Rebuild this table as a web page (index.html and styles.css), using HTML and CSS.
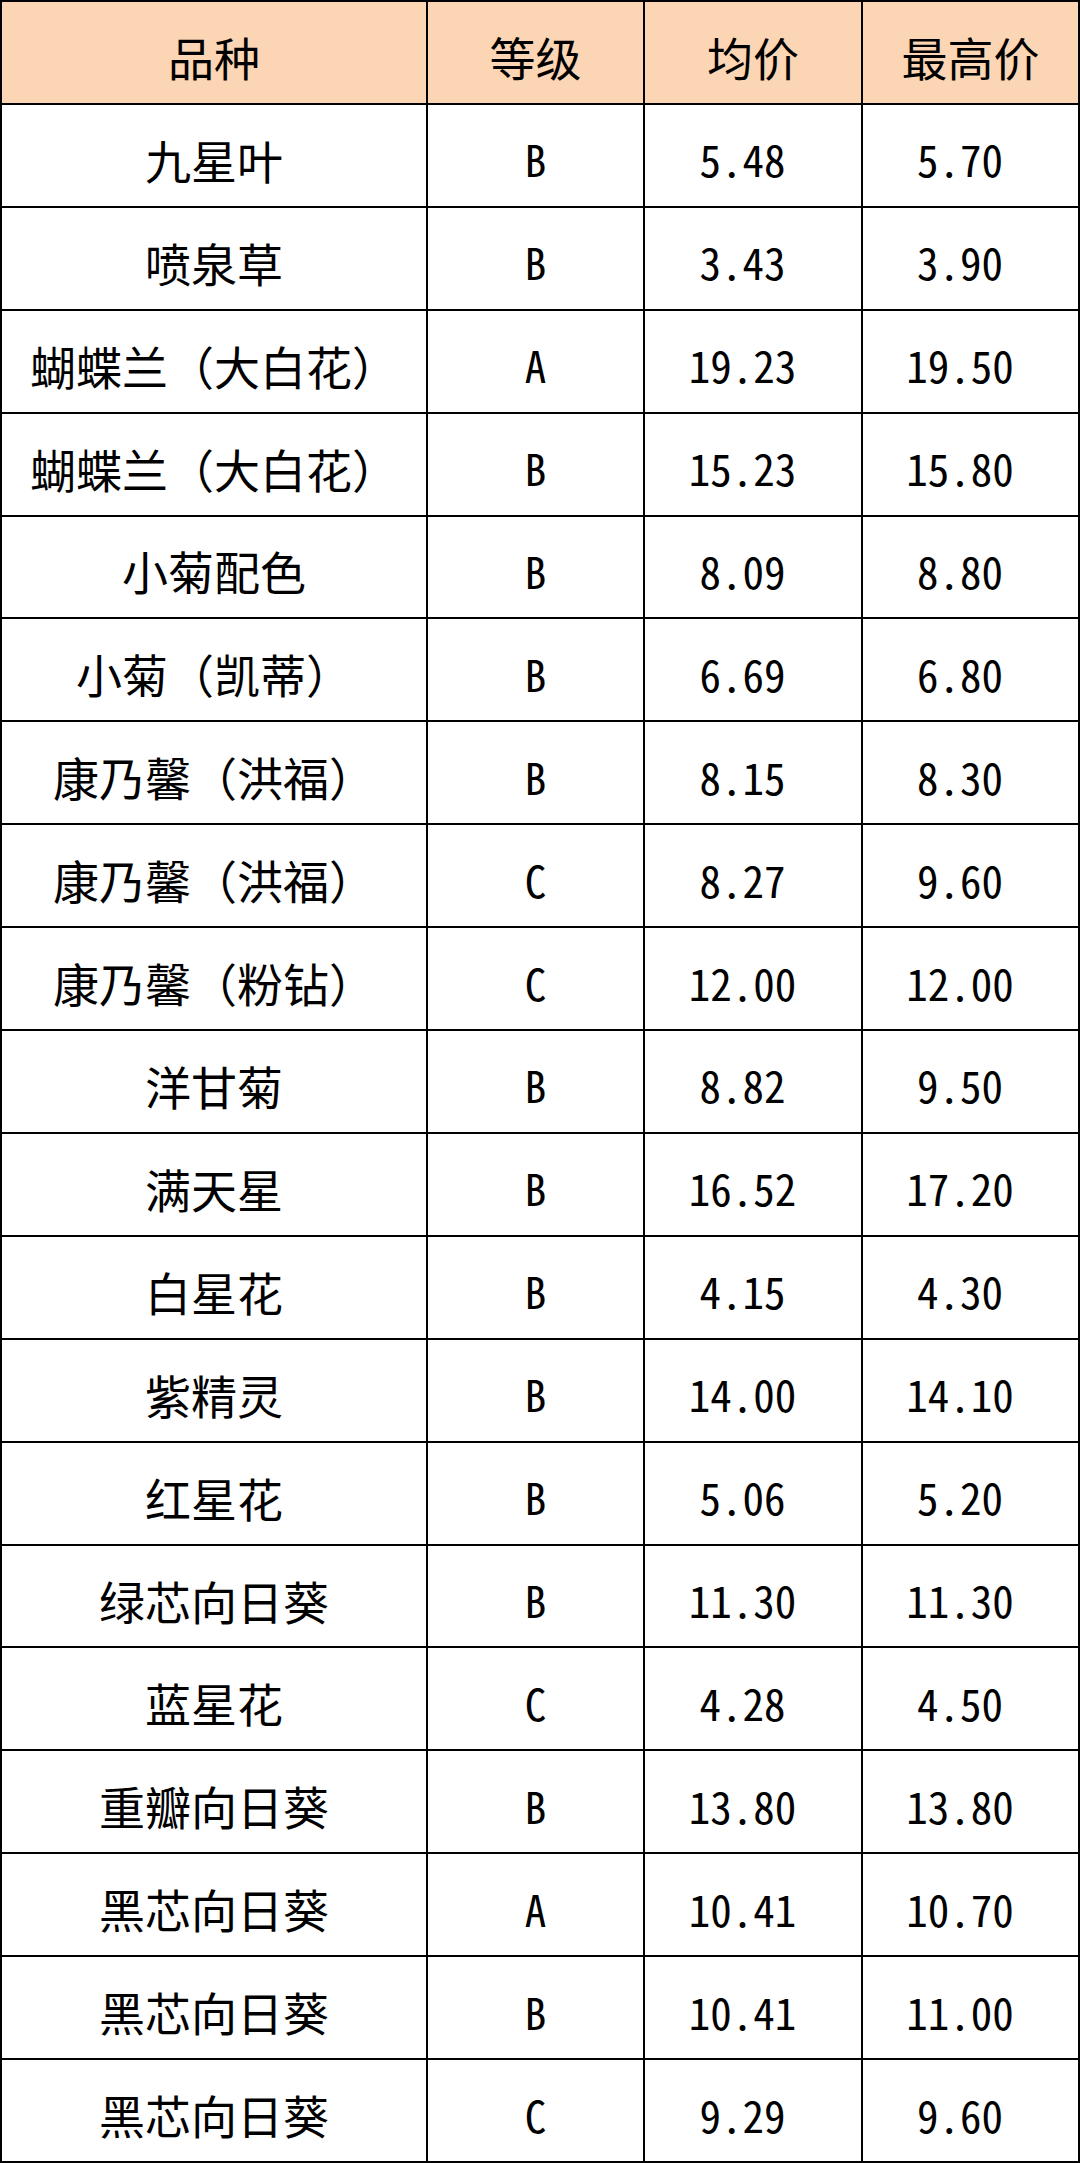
FILE: index.html
```html
<!DOCTYPE html>
<html lang="zh-CN">
<head>
<meta charset="utf-8">
<title>花卉价格表</title>
<link rel="stylesheet" href="styles.css">
</head>
<body>
<div class="sheet" role="table">
  <div class="cell head name">品种</div><div class="cell head">等级</div><div class="cell head">均价</div><div class="cell head">最高价</div>
  <div class="cell name">九星叶</div><div class="cell grade">B</div><div class="cell num">5.48</div><div class="cell num">5.70</div>
  <div class="cell name">喷泉草</div><div class="cell grade">B</div><div class="cell num">3.43</div><div class="cell num">3.90</div>
  <div class="cell name">蝴蝶兰（大白花）</div><div class="cell grade">A</div><div class="cell num">19.23</div><div class="cell num">19.50</div>
  <div class="cell name">蝴蝶兰（大白花）</div><div class="cell grade">B</div><div class="cell num">15.23</div><div class="cell num">15.80</div>
  <div class="cell name">小菊配色</div><div class="cell grade">B</div><div class="cell num">8.09</div><div class="cell num">8.80</div>
  <div class="cell name">小菊（凯蒂）</div><div class="cell grade">B</div><div class="cell num">6.69</div><div class="cell num">6.80</div>
  <div class="cell name">康乃馨（洪福）</div><div class="cell grade">B</div><div class="cell num">8.15</div><div class="cell num">8.30</div>
  <div class="cell name">康乃馨（洪福）</div><div class="cell grade">C</div><div class="cell num">8.27</div><div class="cell num">9.60</div>
  <div class="cell name">康乃馨（粉钻）</div><div class="cell grade">C</div><div class="cell num">12.00</div><div class="cell num">12.00</div>
  <div class="cell name">洋甘菊</div><div class="cell grade">B</div><div class="cell num">8.82</div><div class="cell num">9.50</div>
  <div class="cell name">满天星</div><div class="cell grade">B</div><div class="cell num">16.52</div><div class="cell num">17.20</div>
  <div class="cell name">白星花</div><div class="cell grade">B</div><div class="cell num">4.15</div><div class="cell num">4.30</div>
  <div class="cell name">紫精灵</div><div class="cell grade">B</div><div class="cell num">14.00</div><div class="cell num">14.10</div>
  <div class="cell name">红星花</div><div class="cell grade">B</div><div class="cell num">5.06</div><div class="cell num">5.20</div>
  <div class="cell name">绿芯向日葵</div><div class="cell grade">B</div><div class="cell num">11.30</div><div class="cell num">11.30</div>
  <div class="cell name">蓝星花</div><div class="cell grade">C</div><div class="cell num">4.28</div><div class="cell num">4.50</div>
  <div class="cell name">重瓣向日葵</div><div class="cell grade">B</div><div class="cell num">13.80</div><div class="cell num">13.80</div>
  <div class="cell name">黑芯向日葵</div><div class="cell grade">A</div><div class="cell num">10.41</div><div class="cell num">10.70</div>
  <div class="cell name">黑芯向日葵</div><div class="cell grade">B</div><div class="cell num">10.41</div><div class="cell num">11.00</div>
  <div class="cell name">黑芯向日葵</div><div class="cell grade">C</div><div class="cell num">9.29</div><div class="cell num">9.60</div>
</div>
</body>
</html>
```

FILE: styles.css
```css
html, body {
  margin: 0;
  padding: 0;
  background: #ffffff;
}

.sheet {
  box-sizing: border-box;
  width: 1080px;
  height: 2163px;
  padding: 2px;
  background: #000000;
  display: grid;
  grid-template-columns: 424px 215px 216px 215px;
  grid-template-rows: repeat(21, 1fr);
  gap: 2px;
  font-family: "Noto Sans Mono CJK SC", "Noto Sans CJK SC", sans-serif;
  color: #000000;
}

.cell {
  background: #ffffff;
  display: flex;
  align-items: center;
  justify-content: center;
  padding-top: 7px;
  box-sizing: border-box;
  font-size: 46px;
  line-height: 1;
  white-space: nowrap;
}

.head {
  background: #fcd5b4;
}

.grade {
  font-size: 43px;
}

.num {
  font-size: 43px;
  padding-right: 21px;
}
```
